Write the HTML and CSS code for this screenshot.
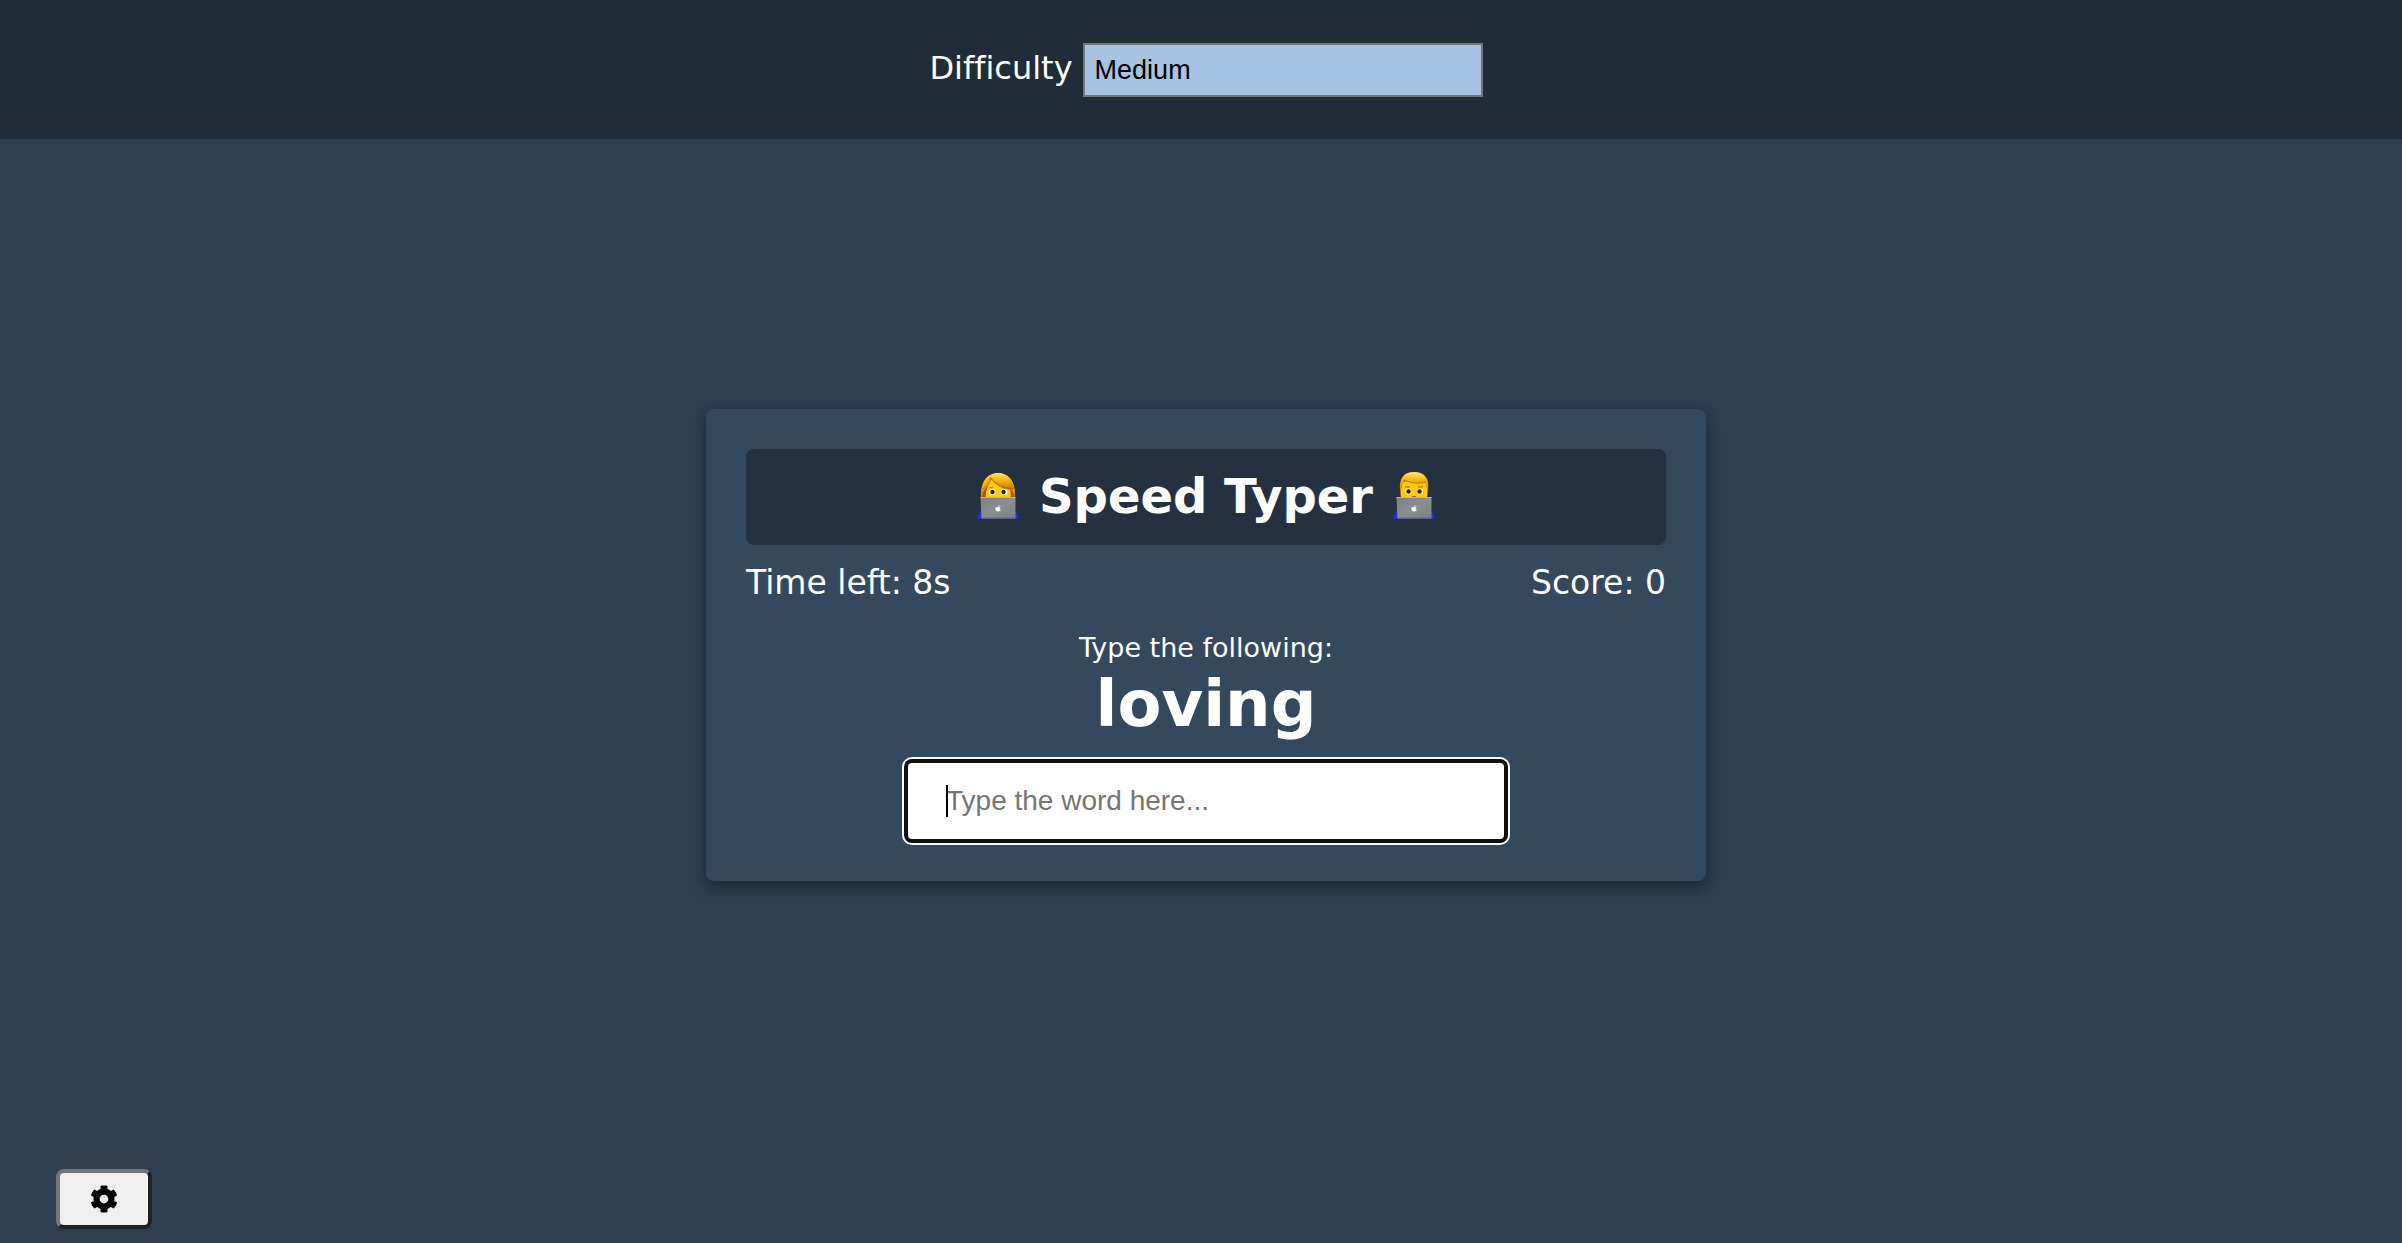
FILE: index.html
```
<!DOCTYPE html>
<html lang="en">
<head>
<meta charset="utf-8">
<meta name="viewport" content="width=device-width, initial-scale=1">
<title>Speed Typer</title>
<link rel="stylesheet" href="styles.css">
</head>
<body>
<header class="settings">
  <form class="settings-form">
    <label for="difficulty">Difficulty</label>
    <select id="difficulty" class="difficulty">
      <option>Easy</option>
      <option selected>Medium</option>
      <option>Hard</option>
    </select>
  </form>
</header>

<main class="stage">
  <section class="card">
    <h1 class="title">
      <svg class="person" viewBox="0 0 42 48" aria-hidden="true">
        <defs>
          <linearGradient id="hair" x1="0" y1="0" x2="0" y2="1"><stop offset="0" stop-color="#ffe680"/><stop offset=".35" stop-color="#ffbd14"/><stop offset="1" stop-color="#c97a05"/></linearGradient>
          <linearGradient id="lid" x1="0" y1="0" x2="1" y2="1"><stop offset="0" stop-color="#7d8083"/><stop offset=".5" stop-color="#8b8e91"/><stop offset="1" stop-color="#7d8083"/></linearGradient>
        </defs>
        <path d="M0 47 3 39H39L42 47Z" fill="#2432c8"/>
        <path d="M4 26C3 10 10 1 21 1S39 10 38 26Z" fill="url(#hair)"/>
        <path d="M5 26C5 21 8 15 13 12L34 18C37 20 37 24 37 26Z" fill="#a95b08"/>
        <path d="M9 26C8 20 11 13 14 8C19 14 27 17 33 18C34 21 34 24 33 26Z" fill="#ffc90c"/>
        <path d="M5 18C7 12 10 7 15 3C14 8 10 14 5 18Z" fill="#f5a60c"/>
        <path d="M14 5C18 12 28 16 37 17C36 8 30 2 21 1Q16 1 14 5Z" fill="url(#hair)"/>
        <path d="M14 6C13 11 9 15 6 17M14 6C18 13 28 16 36 17" fill="none" stroke="#a9600a"/>
        <ellipse cx="15" cy="20" rx="3.500" ry="3" fill="#fff"/><ellipse cx="27" cy="20" rx="3.500" ry="3" fill="#fff"/>
        <circle cx="15.500" cy="20" r="2.200" fill="#382006"/><circle cx="26.500" cy="20" r="2.200" fill="#382006"/>
        <path d="M12 16 16 15M25 15 29 16" stroke="#b5700a"/>
        <path d="M3.500 25H38.500V46.500H4.500Z" fill="url(#lid)"/>
        <path d="M3.500 25.500H38.500" stroke="#b4b6b8"/><path d="M4.500 46H38" stroke="#626568"/>
        <path d="M21 35.500C19 34 18 36 18.500 37.500S20 40 21.200 39.300C22.500 40 23.500 38.500 23.800 37.800C22.500 37 22.500 36 23.500 35.200C22.800 34.500 21.800 35 21 35.500ZM21 34.800Q21 33.200 22.500 33Q22.300 34.500 21 34.800Z" fill="#fff"/>
      </svg>
      <span>Speed Typer</span>
      <svg class="person" viewBox="0 0 42 48" aria-hidden="true">
        <path d="M0 47 3 39H39L42 47Z" fill="#2432c8"/>
        <path d="M8 26C5 12 9 1 21 1S37 12 34 26Z" fill="#c27c08"/>
        <path d="M8 26V14C8 6 34 6 34 14V26Z" fill="#ffc90c"/>
        <path d="M7 19C6 7 10 0 21 0S37 7 35 19C33 17 34 14 32 10C25 12 18 11 11 8C9 11 10 16 7 19Z" fill="url(#hair)"/>
        <path d="M11 8C18 11 25 12 33 10" fill="none" stroke="#c27905"/>
        <ellipse cx="15" cy="19.500" rx="3.200" ry="3" fill="#fff0b0"/><ellipse cx="27" cy="19.500" rx="3.200" ry="3" fill="#fff0b0"/>
        <circle cx="15.500" cy="19.500" r="2.200" fill="#382006"/><circle cx="26.500" cy="19.500" r="2.200" fill="#382006"/>
        <path d="M12 15 17 15M25 15 30 15M19 24.500H23" stroke="#a9600a"/>
        <path d="M3.500 25H38.500V46.500H4.500Z" fill="url(#lid)"/>
        <path d="M3.500 25.500H38.500" stroke="#b4b6b8"/><path d="M4.500 46H38" stroke="#626568"/>
        <path d="M21 35.500C19 34 18 36 18.500 37.500S20 40 21.200 39.300C22.500 40 23.500 38.500 23.800 37.800C22.500 37 22.500 36 23.500 35.200C22.800 34.500 21.800 35 21 35.500ZM21 34.800Q21 33.200 22.500 33Q22.300 34.500 21 34.800Z" fill="#fff"/>
      </svg>
    </h1>
    <div class="stats">
      <p>Time left: <span>8s</span></p>
      <p>Score: <span>0</span></p>
    </div>
    <label class="prompt" for="word-input">Type the following:</label>
    <h2 class="word">loving</h2>
    <div class="field">
      <input id="word-input" class="word-input" type="text" autocomplete="off" placeholder="Type the word here...">
      <span class="caret"></span>
    </div>
  </section>
</main>

<footer class="toolbar">
  <button class="settings-btn" type="button" aria-label="Settings">
    <svg class="gear" viewBox="0 0 512 512" aria-hidden="true"><path d="M487.400 315.700l-42.600-24.600c4.300-23.200 4.300-47 0-70.200l42.600-24.600c4.900-2.800 7.100-8.600 5.500-14-11.100-35.600-30-67.800-54.700-94.600-3.800-4.100-10-5.100-14.800-2.300L380.800 110c-17.900-15.400-38.500-27.300-60.800-35.100V25.800c0-5.600-3.900-10.500-9.400-11.700-36.700-8.200-74.300-7.800-109.200 0-5.500 1.200-9.400 6.100-9.400 11.700V75c-22.200 7.900-42.800 19.800-60.800 35.100L88.700 85.500c-4.900-2.800-11-1.900-14.800 2.300-24.700 26.700-43.600 58.900-54.700 94.600-1.700 5.400.6 11.200 5.500 14L67.300 221c-4.300 23.200-4.300 47 0 70.200l-42.600 24.600c-4.900 2.800-7.100 8.600-5.500 14 11.100 35.600 30 67.800 54.700 94.600 3.800 4.100 10 5.100 14.800 2.300l42.600-24.600c17.900 15.400 38.500 27.300 60.800 35.100v49.200c0 5.600 3.900 10.500 9.400 11.700 36.700 8.200 74.300 7.800 109.200 0 5.500-1.200 9.400-6.100 9.400-11.700v-49.200c22.200-7.900 42.800-19.800 60.800-35.100l42.600 24.600c4.900 2.800 11 1.900 14.800-2.300 24.700-26.700 43.600-58.900 54.700-94.600 1.500-5.500-.7-11.300-5.600-14.100zM256 336c-44.100 0-80-35.900-80-80s35.900-80 80-80 80 35.900 80 80-35.900 80-80 80z"/></svg>
  </button>
</footer>
</body>
</html>
```
FILE: styles.css
```
* {
  box-sizing: border-box;
}

body {
  display: flex;
  flex-direction: column;
  min-height: 100vh;
  margin: 0;
  background: #2d3e50;
  color: #fff;
  font-family: Verdana, "DejaVu Sans", sans-serif;
  font-variant-ligatures: none;
}

h1,
h2,
p {
  margin: 0;
}

.settings {
  padding: 43px 0 42px 10px;
  background: #202c37;
}

.settings-form {
  display: flex;
  justify-content: center;
  align-items: baseline;
  gap: 10px;
  font-size: 32px;
  line-height: 40px;
}

.difficulty {
  width: 400px;
  max-width: 60%;
  height: 54px;
  padding: 0 10px;
  border: 2px solid #767676;
  border-radius: 0;
  appearance: none;
  background: #a6c3e2;
  color: #000;
  font: 27px "Liberation Sans", Arial, sans-serif;
}

.stage {
  display: flex;
  flex: 1;
  justify-content: center;
  align-items: center;
  padding-left: 10px;
}

.card {
  display: flex;
  flex-direction: column;
  align-items: center;
  width: 1000px;
  max-width: 100%;
  padding: 40px;
  border-radius: 8px;
  background: #34495d;
  box-shadow: 0 8px 16px rgba(0, 0, 0, 0.2), 0 4px 12px rgba(0, 0, 0, 0.2);
}

.title {
  display: flex;
  align-items: center;
  justify-content: center;
  gap: 20px;
  width: 100%;
  padding: 15px 0 17px;
  border-radius: 8px;
  background: #253141;
  font-size: 48px;
  line-height: 64px;
}

.person {
  width: 42px;
  height: 48px;
}

.stats {
  display: flex;
  justify-content: space-between;
  width: 100%;
  padding: 18px 0 14px;
  font-size: 33px;
  line-height: 40px;
}

.prompt {
  padding-top: 11px;
  font-size: 27px;
  line-height: 40px;
}

.word {
  font-size: 64px;
  line-height: 72px;
}

.field {
  position: relative;
  width: 600px;
  max-width: 100%;
  margin-top: 21px;
}

.word-input {
  display: block;
  width: 100%;
  height: 80px;
  padding: 0 38px;
  border: 2px solid #101010;
  border-radius: 6px;
  outline: 0;
  background: #fff;
  box-shadow: 0 0 0 2px #101010, 0 0 0 4px #fff;
  color: #000;
  font: 28px "Liberation Sans", Arial, sans-serif;
}

.word-input::placeholder {
  color: #757575;
}

.caret {
  position: absolute;
  top: 24px;
  left: 40px;
  width: 2px;
  height: 32px;
  background: #000;
}

.toolbar {
  padding: 18px 56px 14px;
}

.settings-btn {
  display: flex;
  align-items: center;
  justify-content: center;
  width: 96px;
  height: 60px;
  padding: 0;
  border: 4px solid;
  border-color: #767676 #212121 #212121 #767676;
  border-radius: 8px;
  background: #efefef;
  color: #000;
}

.gear {
  width: 28px;
  height: 28px;
}
```
